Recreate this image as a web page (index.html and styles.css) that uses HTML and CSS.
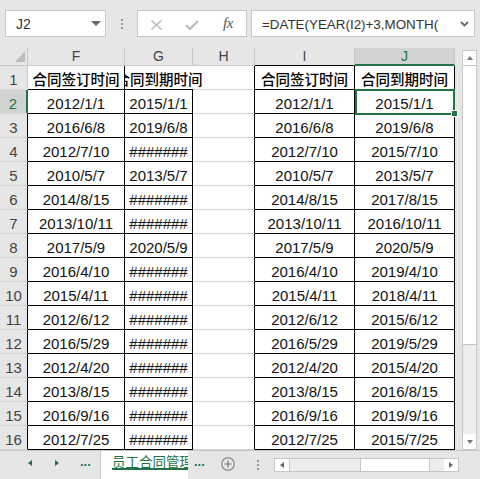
FILE: index.html
```html
<!DOCTYPE html>
<html lang="zh-CN">
<head>
<meta charset="utf-8">
<title>员工合同管理</title>
<link rel="stylesheet" href="styles.css">
</head>
<body>
<div class="app">
  <div class="toolbar">
    <div class="namebox"><span>J2</span><span class="nb-arrow"></span></div>
    <div class="grip"><i></i><i></i><i></i></div>
    <div class="fbtns">
      <span class="fslot"><svg width="11" height="10" viewBox="0 0 11 10"><path d="M0.5 0.5 L10.5 9.5 M10.5 0.5 L0.5 9.5" stroke="#b8b8b8" stroke-width="1.5" fill="none"/></svg></span>
      <span class="fslot"><svg width="14" height="10" viewBox="0 0 14 10"><path d="M1 5 L5 9 L13 1" stroke="#b8b8b8" stroke-width="2" fill="none"/></svg></span>
      <span class="fslot fx">fx</span>
    </div>
    <div class="formula"><span>=DATE(YEAR(I2)+3,MONTH(</span><svg width="9" height="6" viewBox="0 0 9 6"><path d="M1 1 L4.5 4.5 L8 1" stroke="#666" stroke-width="1.8" fill="none"/></svg></div>
  </div>

  <div class="main">
    <div class="sheet">
      <div class="ch corner"><span class="corner-tri"></span></div>
      <div class="ch">F</div>
      <div class="ch">G</div>
      <div class="ch">H</div>
      <div class="ch bk">I</div>
      <div class="ch selc">J</div>

      <div class="rh">1</div>
      <div class="c br bb title">合同签订时间</div>
      <div class="c gh title"><div class="ovf">合同到期时间</div></div>
      <div class="c br bb title">合同签订时间</div>
      <div class="c br bb title">合同到期时间</div>

      <div class="rh bkr selr">2</div>
      <div class="c br bb">2012/1/1</div>
      <div class="c br bb">2015/1/1</div>
      <div class="c br"></div>
      <div class="c br bb">2012/1/1</div>
      <div class="c br bb active">2015/1/1<span class="handle"></span></div>

      <div class="rh bkr">3</div>
      <div class="c br bb">2016/6/8</div>
      <div class="c br bb">2019/6/8</div>
      <div class="c br"></div>
      <div class="c br bb">2016/6/8</div>
      <div class="c br bb">2019/6/8</div>

      <div class="rh bkr">4</div>
      <div class="c br bb">2012/7/10</div>
      <div class="c br bb">#######</div>
      <div class="c br"></div>
      <div class="c br bb">2012/7/10</div>
      <div class="c br bb">2015/7/10</div>

      <div class="rh bkr">5</div>
      <div class="c br bb">2010/5/7</div>
      <div class="c br bb">2013/5/7</div>
      <div class="c br"></div>
      <div class="c br bb">2010/5/7</div>
      <div class="c br bb">2013/5/7</div>

      <div class="rh bkr">6</div>
      <div class="c br bb">2014/8/15</div>
      <div class="c br bb">#######</div>
      <div class="c br"></div>
      <div class="c br bb">2014/8/15</div>
      <div class="c br bb">2017/8/15</div>

      <div class="rh bkr">7</div>
      <div class="c br bb">2013/10/11</div>
      <div class="c br bb">#######</div>
      <div class="c br"></div>
      <div class="c br bb">2013/10/11</div>
      <div class="c br bb">2016/10/11</div>

      <div class="rh bkr">8</div>
      <div class="c br bb">2017/5/9</div>
      <div class="c br bb">2020/5/9</div>
      <div class="c br"></div>
      <div class="c br bb">2017/5/9</div>
      <div class="c br bb">2020/5/9</div>

      <div class="rh bkr">9</div>
      <div class="c br bb">2016/4/10</div>
      <div class="c br bb">#######</div>
      <div class="c br"></div>
      <div class="c br bb">2016/4/10</div>
      <div class="c br bb">2019/4/10</div>

      <div class="rh bkr">10</div>
      <div class="c br bb">2015/4/11</div>
      <div class="c br bb">#######</div>
      <div class="c br"></div>
      <div class="c br bb">2015/4/11</div>
      <div class="c br bb">2018/4/11</div>

      <div class="rh bkr">11</div>
      <div class="c br bb">2012/6/12</div>
      <div class="c br bb">#######</div>
      <div class="c br"></div>
      <div class="c br bb">2012/6/12</div>
      <div class="c br bb">2015/6/12</div>

      <div class="rh bkr">12</div>
      <div class="c br bb">2016/5/29</div>
      <div class="c br bb">#######</div>
      <div class="c br"></div>
      <div class="c br bb">2016/5/29</div>
      <div class="c br bb">2019/5/29</div>

      <div class="rh bkr">13</div>
      <div class="c br bb">2012/4/20</div>
      <div class="c br bb">#######</div>
      <div class="c br"></div>
      <div class="c br bb">2012/4/20</div>
      <div class="c br bb">2015/4/20</div>

      <div class="rh bkr">14</div>
      <div class="c br bb">2013/8/15</div>
      <div class="c br bb">#######</div>
      <div class="c br"></div>
      <div class="c br bb">2013/8/15</div>
      <div class="c br bb">2016/8/15</div>

      <div class="rh bkr">15</div>
      <div class="c br bb">2016/9/16</div>
      <div class="c br bb">#######</div>
      <div class="c br"></div>
      <div class="c br bb">2016/9/16</div>
      <div class="c br bb">2019/9/16</div>

      <div class="rh bkr">16</div>
      <div class="c br bb">2012/7/25</div>
      <div class="c br bb">#######</div>
      <div class="c br"></div>
      <div class="c br bb">2012/7/25</div>
      <div class="c br bb">2015/7/25</div>
    </div>

    <div class="vscroll">
      <div class="vbtn"><span class="tri-up"></span></div>
      <div class="vthumb"></div>
      <div class="vtrack"></div>
      <div class="vbtn down"><span class="tri-down"></span></div>
    </div>
  </div>

  <div class="tabbar">
    <span class="nav-l"></span>
    <span class="nav-r"></span>
    <span class="more">...</span>
    <div class="tab"><span class="tab-label">员工合同管理</span></div>
    <span class="more more2">...</span>
    <svg class="addsheet" width="14" height="14" viewBox="0 0 14 14"><circle cx="7" cy="7" r="6.3" fill="none" stroke="#7a7a7a" stroke-width="1.1"/><path d="M7 3.5 V10.5 M3.5 7 H10.5" stroke="#7a7a7a" stroke-width="1.2"/></svg>
    <div class="grip grip2"><i></i><i></i><i></i></div>
    <div class="hscroll">
      <div class="hbtn"><span class="tri-left"></span></div>
      <div class="htrack t1"></div>
      <div class="hthumb"></div>
      <div class="htrack t2"></div>
      <div class="hbtn right"><span class="tri-right"></span></div>
    </div>
  </div>
</div>
</body>
</html>
```

FILE: styles.css
```css
html, body {
  margin: 0;
  padding: 0;
}
body {
  width: 480px;
  height: 479px;
  overflow: hidden;
  background: #e6e6e6;
  font-family: "Liberation Sans", Arial, "Noto Sans CJK SC", sans-serif;
}
.app {
  width: 480px;
  height: 479px;
  display: flex;
  flex-direction: column;
}

/* ---------- formula bar ---------- */
.toolbar {
  height: 48px;
  box-sizing: border-box;
  padding-top: 10px;
  display: flex;
  align-items: flex-start;
  flex: none;
}
.namebox {
  margin-left: 5px;
  width: 101px;
  height: 27px;
  box-sizing: border-box;
  border: 1px solid #c6c6c6;
  background: #fff;
  display: flex;
  align-items: center;
  justify-content: space-between;
  padding: 0 4px 0 10px;
  font-size: 14px;
  color: #333;
}
.nb-arrow {
  width: 0;
  height: 0;
  border-left: 5px solid transparent;
  border-right: 5px solid transparent;
  border-top: 5px solid #6b6b6b;
}
.grip {
  width: 2px;
  margin-left: 15px;
  margin-top: 9px;
  display: flex;
  flex-direction: column;
  gap: 2px;
}
.grip i {
  display: block;
  width: 2px;
  height: 2px;
  background: #9a9a9a;
}
.fbtns {
  margin-left: 14px;
  width: 110px;
  height: 27px;
  box-sizing: border-box;
  border: 1px solid #c6c6c6;
  background: #fff;
  display: flex;
  align-items: center;
}
.fslot {
  width: 36px;
  display: flex;
  justify-content: center;
  align-items: center;
  padding-top: 2px;
}
.fx {
  font-family: "Liberation Serif", "Times New Roman", serif;
  font-style: italic;
  font-size: 15px;
  color: #555;
  padding-top: 0;
  letter-spacing: -0.5px;
}
.formula {
  margin-left: 4px;
  width: 224px;
  height: 27px;
  box-sizing: border-box;
  border: 1px solid #c6c6c6;
  background: #fff;
  display: flex;
  align-items: center;
  justify-content: space-between;
  padding: 1px 5px 0 10px;
  font-size: 13.4px;
  color: #333;
  white-space: nowrap;
}

/* ---------- sheet grid ---------- */
.main {
  height: 402px;
  display: flex;
  flex: none;
}
.sheet {
  width: 455px;
  display: grid;
  grid-template-columns: 28px 97px 68px 62px 100px 100px;
  grid-template-rows: 18px repeat(16, 24px);
  background: #fff;
}
.ch {
  box-sizing: border-box;
  background: #e6e6e6;
  border-right: 1px solid #c8c8c8;
  border-bottom: 1px solid #c8c8c8;
  display: flex;
  justify-content: center;
  align-items: flex-start;
  font-size: 14px;
  line-height: 17px;
  color: #444;
}
.ch.bk {
  border-bottom-color: #000;
}
.ch.selc {
  background: #d2d2d2;
  color: #217346;
  border-bottom: 2px solid #217346;
}
.corner {
  justify-content: flex-end;
  align-items: flex-end;
  padding: 0 2px 3px 0;
}
.corner-tri {
  width: 0;
  height: 0;
  border-left: 10px solid transparent;
  border-bottom: 11px solid #bdbdbd;
}
.rh {
  box-sizing: border-box;
  background: #e6e6e6;
  border-right: 1px solid #c8c8c8;
  border-bottom: 1px solid #d6d6d6;
  display: flex;
  justify-content: center;
  align-items: flex-end;
  padding-bottom: 1px;
  font-size: 15px;
  line-height: 16px;
  color: #444;
}
.rh.bkr {
  border-right-color: #000;
}
.rh.selr {
  background: #d2d2d2;
  color: #217346;
  border-right: 2px solid #217346;
}
.c {
  box-sizing: border-box;
  border-right: 1px solid #d4d4d4;
  border-bottom: 1px solid #d4d4d4;
  display: flex;
  justify-content: center;
  align-items: flex-end;
  padding-bottom: 1px;
  font-size: 15px;
  line-height: 16px;
  color: #111;
  white-space: nowrap;
}
.c.title {
  font-size: 14.5px;
  font-weight: 500;
  color: #000;
}
.c.br {
  border-right-color: #000;
}
.c.bb {
  border-bottom-color: #000;
}
.c.gh {
  grid-column: span 2;
  border-right-color: #000;
  border-bottom: none;
  padding-bottom: 2px;
  overflow: hidden;
  justify-content: flex-start;
  background:
    linear-gradient(#000, #000) left bottom / 68px 1px no-repeat,
    linear-gradient(#d4d4d4, #d4d4d4) right bottom / 61px 1px no-repeat;
}
.ovf {
  flex: none;
  width: 68px;
  display: flex;
  justify-content: center;
}
.c.active {
  position: relative;
}
.c.active::after {
  content: "";
  position: absolute;
  left: 0;
  right: -1px;
  top: -1px;
  bottom: -2px;
  border: 2px solid #217346;
  box-sizing: border-box;
}
.handle {
  position: absolute;
  right: -4px;
  bottom: -4px;
  width: 7px;
  height: 7px;
  box-sizing: border-box;
  background: #217346;
  border: 1px solid #fff;
  z-index: 2;
}

/* ---------- vertical scrollbar ---------- */
.vscroll {
  width: 25px;
  box-sizing: border-box;
  padding: 2px 3px 0 7px;
  display: flex;
  flex-direction: column;
}
.vbtn {
  height: 16px;
  flex: none;
  box-sizing: border-box;
  background: #fff;
  border: 1px solid #c6c6c6;
  display: flex;
  justify-content: center;
  align-items: center;
}
.vbtn.down {
  border-top: none;
}
.vthumb {
  height: 279px;
  flex: none;
  box-sizing: border-box;
  background: #fff;
  border: 1px solid #c6c6c6;
  border-top: none;
}
.vtrack {
  flex: 1;
  background: #ededed;
  border-left: 1px solid #c6c6c6;
  border-right: 1px solid #c6c6c6;
}
.tri-up, .tri-down {
  width: 0;
  height: 0;
  border-left: 3.5px solid transparent;
  border-right: 3.5px solid transparent;
}
.tri-up { border-bottom: 4px solid #777; }
.tri-down { border-top: 4px solid #777; }

/* ---------- sheet tabs ---------- */
.tabbar {
  height: 29px;
  box-sizing: border-box;
  border-top: 1px solid #c6c6c6;
  display: flex;
  align-items: flex-start;
  flex: none;
}
.nav-l, .nav-r {
  width: 0;
  height: 0;
  margin-top: 9px;
  border-top: 3.5px solid transparent;
  border-bottom: 3.5px solid transparent;
}
.nav-l {
  margin-left: 28px;
  border-right: 4px solid #217346;
}
.nav-r {
  margin-left: 23px;
  border-left: 4px solid #217346;
}
.more {
  width: 11px;
  margin-left: 21px;
  margin-top: 4px;
  font-size: 13px;
  font-weight: bold;
  line-height: 13px;
  color: #217346;
}
.tab {
  margin-left: 9px;
  width: 88px;
  align-self: stretch;
  box-sizing: border-box;
  border-left: 1px solid #c6c6c6;
  background: #fff;
  overflow: hidden;
  padding: 2px 0 0 11px;
  white-space: nowrap;
}
.tab-label {
  display: inline-block;
  font-family: "Noto Sans CJK SC", sans-serif;
  font-size: 13.5px;
  line-height: 13px;
  letter-spacing: 0;
  color: #217346;
  border-bottom: 2px solid #217346;
}
.more2 {
  margin-left: 6px;
}
.addsheet {
  margin-left: 16px;
  margin-top: 6px;
}
.grip2 {
  margin-left: 22px;
  margin-top: 9px;
}
.hscroll {
  margin-left: 15px;
  margin-top: 7px;
  width: 185px;
  height: 14px;
  display: flex;
}
.hbtn {
  width: 16px;
  flex: none;
  box-sizing: border-box;
  background: #fff;
  border: 1px solid #c6c6c6;
  display: flex;
  justify-content: center;
  align-items: center;
}
.hbtn.right {
  width: 15px;
  border-left: none;
}
.htrack {
  box-sizing: border-box;
  background: #ededed;
  border-top: 1px solid #c6c6c6;
  border-bottom: 1px solid #c6c6c6;
}
.htrack.t1 { width: 70px; }
.htrack.t2 { width: 14px; }
.hthumb {
  width: 70px;
  box-sizing: border-box;
  background: #fff;
  border: 1px solid #c6c6c6;
}
.tri-left, .tri-right {
  width: 0;
  height: 0;
  border-top: 3px solid transparent;
  border-bottom: 3px solid transparent;
}
.tri-left { border-right: 4px solid #666; }
.tri-right { border-left: 4px solid #666; }
```
